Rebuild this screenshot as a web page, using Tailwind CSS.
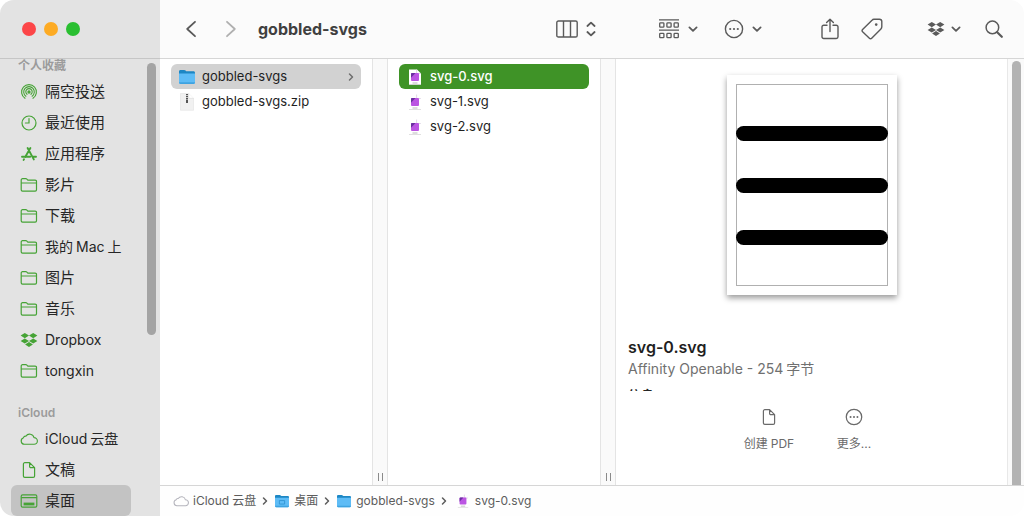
<!DOCTYPE html>
<html lang="zh-CN">
  <head>
    <meta charset="UTF-8" />
    <meta name="viewport" content="width=device-width, initial-scale=1.0" />
    <title>gobbled-svgs</title>
    <script src="https://cdn.jsdelivr.net/npm/@tailwindcss/browser@4"></script>
  </head>
  <body class="bg-white font-['Inter','Noto_Sans_CJK_SC',sans-serif] text-[#262626]">
    <!-- Icons -->
    <svg class="hidden">
      <symbol id="i-folder" viewBox="0 0 18 16" fill="none" stroke="currentColor" stroke-width="1.2" stroke-linejoin="round">
        <path d="M1.2 12.8V3a1.3 1.3 0 0 1 1.3-1.3h3.3c.5 0 .8.2 1.1.5l.9.9h7.4a1.3 1.3 0 0 1 1.3 1.3v8.4a1.3 1.3 0 0 1-1.3 1.3H2.5a1.3 1.3 0 0 1-1.3-1.3zM1.2 6h15.3" />
      </symbol>
      <symbol id="i-airdrop" viewBox="0 0 18 18" fill="none" stroke="currentColor" stroke-width="1.1" stroke-linecap="round">
        <path d="M5 15.3a7.4 7.4 0 1 1 8 0M5.9 13.2a5.3 5.3 0 1 1 6.2 0M7 11.3a3.2 3.2 0 1 1 4 0" />
        <circle cx="9" cy="9" r="1.1" fill="currentColor" />
      </symbol>
      <symbol id="i-clock" viewBox="0 0 18 18" fill="none" stroke="currentColor" stroke-width="1.2" stroke-linecap="round">
        <circle cx="9" cy="9" r="7" />
        <path d="M9 4.6V9H5.4" />
      </symbol>
      <symbol id="i-apps" viewBox="0 0 18 18" fill="none" stroke="currentColor" stroke-width="1.9" stroke-linecap="round">
        <path d="M7.6 3l6.2 11.4M10.4 3L5.2 12M2 11.8h8.2M13.4 11.8H16M4 14.2l-.4.7" />
      </symbol>
      <symbol id="i-dropbox" viewBox="0 0 18 16" fill="currentColor">
        <path d="M4.8 1L9 3.6 4.8 6.2.6 3.6zM13.2 1l4.2 2.6-4.2 2.6L9 3.6zM4.8 6.4L9 9l-4.2 2.6L.6 9zM13.2 6.4L17.4 9l-4.2 2.6L9 9zM9 10l3.9 2.5L9 15l-3.9-2.5z" />
      </symbol>
      <symbol id="i-cloud" viewBox="0 0 19 14" fill="none" stroke="currentColor" stroke-width="1.2" stroke-linejoin="round">
        <path d="M4.6 12.6a3.6 3.6 0 0 1-.9-7A2.2 2.2 0 0 1 6.2 4.1 4.7 4.7 0 0 1 14.8 5.6 3.5 3.5 0 0 1 14.9 12.6z" />
      </symbol>
      <symbol id="i-doc" viewBox="0 0 18 18" fill="none" stroke="currentColor" stroke-width="1.2" stroke-linejoin="round">
        <path d="M9.6 1.7H4.8a1.4 1.4 0 0 0-1.4 1.4v11.8a1.4 1.4 0 0 0 1.4 1.4h8.4a1.4 1.4 0 0 0 1.4-1.4V6.7zM9.6 1.7v3.8a1.2 1.2 0 0 0 1.2 1.2h3.8" />
      </symbol>
      <symbol id="i-desktop" viewBox="0 0 18 16">
        <rect x="1.2" y="1.8" width="15.6" height="12.4" rx="1.4" fill="none" stroke="currentColor" stroke-width="1.2" />
        <path d="M1.2 4.6h15.6" stroke="currentColor" stroke-width="1.2" />
        <rect x="3.6" y="9.6" width="10.8" height="2.8" fill="currentColor" />
      </symbol>
      <symbol id="i-down" viewBox="0 0 10 10" fill="none" stroke="currentColor" stroke-width="1.8" stroke-linecap="round" stroke-linejoin="round">
        <path d="M1.4 3.4L5 6.8l3.6-3.4" />
      </symbol>
      <symbol id="i-next" viewBox="0 0 8 10" fill="none" stroke="currentColor" stroke-width="1.5" stroke-linecap="round" stroke-linejoin="round">
        <path d="M2.5 2l3 3-3 3" />
      </symbol>
      <symbol id="i-more" viewBox="0 0 20 20">
        <circle cx="10" cy="10" r="8.6" fill="none" stroke="currentColor" stroke-width="1.4" />
        <g fill="currentColor"><circle cx="6.2" cy="10" r="1.1" /><circle cx="10" cy="10" r="1.1" /><circle cx="13.8" cy="10" r="1.1" /></g>
      </symbol>
      <symbol id="i-bluefolder" viewBox="0 0 18 16">
        <path d="M1 2.5C1 1.6 1.6 1 2.5 1h3.7c.6 0 1 .2 1.4.6l.6.6h7.3c.9 0 1.5.6 1.5 1.5V8H1z" fill="#1d87c4" />
        <path d="M1 4.4h16v9.1c0 .9-.6 1.5-1.5 1.5h-13C1.6 15 1 14.4 1 13.5z" fill="#5ebcf6" />
        <path d="M1 13.3c0 1.1.6 1.7 1.5 1.7h13c.9 0 1.5-.6 1.5-1.7" fill="#3fa3e0" />
      </symbol>
      <symbol id="i-svgfile" viewBox="0 0 14 16">
        <path d="M1 .5h8l4 4v11H1z" fill="#fff" />
        <path d="M1 15.5h12" stroke="#d8d8d8" stroke-width=".8" />
        <path d="M8.6.5v4h4.2" fill="none" stroke="#d9cfe0" stroke-width=".8" />
        <rect x="3" y="4" width="8" height="8" rx="1" fill="#bb55e2" />
        <path d="M3 5a1 1 0 0 1 1-1h3.5L3 8.8z" fill="#6a2fa0" />
        <path d="M4.5 14h5" stroke="#a9a9a9" stroke-width=".8" />
      </symbol>
      <symbol id="i-zip" viewBox="0 0 18 18">
        <path d="M2.5.5h8.2l4.8 4.8v12h-13z" fill="#f1f1f1" stroke="#e2e2e2" stroke-width=".6" />
        <path d="M10.7.5v4.8h4.8" fill="#fff" stroke="#d8d8d8" stroke-width=".6" />
        <path d="M9 1v6" stroke="#555" stroke-width="2" stroke-dasharray="1.3 .7" />
        <rect x="8" y="6.5" width="2" height="3.5" rx=".6" fill="#555" />
      </symbol>
    </svg>

    <div class="flex h-screen overflow-hidden rounded-[14px]">
      <!-- Sidebar -->
      <aside class="flex w-40 shrink-0 flex-col bg-[#e3e3e3]">
        <div class="flex h-[59px] shrink-0 items-center gap-2 border-b border-[#c6c6c6] pl-[22px]">
          <button aria-label="关闭" class="size-[14px] rounded-full bg-[#fc4648]"></button>
          <button aria-label="最小化" class="size-[14px] rounded-full bg-[#fdab24]"></button>
          <button aria-label="缩放" class="size-[14px] rounded-full bg-[#2abf31]"></button>
        </div>
        <div class="flex min-h-0 flex-1">
          <nav class="w-[131px] shrink-0 pl-[11px] text-sm whitespace-nowrap [&_a]:flex [&_a]:h-[31px] [&_a]:items-center [&_a]:pl-[9px] [&_svg]:mr-[7px] [&_svg]:w-[18px] [&_svg]:shrink-0 [&_svg]:text-[#46a336]">
            <h2 class="h-[17px] pl-[7px] text-xs leading-[14px] font-semibold text-[#9b9b9b]">个人收藏</h2>
            <a href="#" class="text-[15px]"><svg class="h-[18px]"><use href="#i-airdrop" /></svg>隔空投送</a>
            <a href="#" class="text-[15px]"><svg class="h-[18px]"><use href="#i-clock" /></svg>最近使用</a>
            <a href="#" class="text-[15px]"><svg class="h-[18px]"><use href="#i-apps" /></svg>应用程序</a>
            <a href="#" class="text-[15px]"><svg class="h-4"><use href="#i-folder" /></svg>影片</a>
            <a href="#" class="text-[15px]"><svg class="h-4"><use href="#i-folder" /></svg>下载</a>
            <a href="#"><svg class="h-4"><use href="#i-folder" /></svg>我的<span class="mx-[3px]">Mac</span>上</a>
            <a href="#" class="text-[15px]"><svg class="h-4"><use href="#i-folder" /></svg>图片</a>
            <a href="#" class="text-[15px]"><svg class="h-4"><use href="#i-folder" /></svg>音乐</a>
            <a href="#"><svg class="h-4"><use href="#i-dropbox" /></svg>Dropbox</a>
            <a href="#"><svg class="h-4"><use href="#i-folder" /></svg>tongxin</a>
            <h2 class="mt-[17px] h-5 pl-[7px] text-xs leading-5 font-semibold text-[#9b9b9b]">iCloud</h2>
            <a href="#"><svg class="h-[14px]"><use href="#i-cloud" /></svg>iCloud<span class="ml-[3px]">云盘</span></a>
            <a href="#" class="text-[15px]"><svg class="h-[18px]"><use href="#i-doc" /></svg>文稿</a>
            <a href="#" class="rounded-md bg-[#c3c3c3] text-[15px]"><svg class="h-4"><use href="#i-desktop" /></svg>桌面</a>
          </nav>
          <div class="mt-1 ml-4 h-[272px] w-[9px] rounded-full bg-[#a4a4a4]"></div>
        </div>
      </aside>

      <div class="flex min-w-0 flex-1 flex-col">
        <!-- Toolbar -->
        <header class="flex h-[59px] shrink-0 items-center border-b border-[#d6d6d6] bg-[#fbfbfb] pr-[21px] pl-6 text-[#5a5a5a]">
          <button aria-label="后退">
            <svg class="h-5 w-[14px]" viewBox="0 0 14 20" fill="none" stroke="currentColor" stroke-width="1.8" stroke-linecap="round" stroke-linejoin="round"><path d="M11 2.800L3.200 10l7.800 7.200" /></svg>
          </button>
          <button aria-label="前进" class="ml-[26px] text-[#b0b0b0]">
            <svg class="h-5 w-[14px]" viewBox="0 0 14 20" fill="none" stroke="currentColor" stroke-width="1.8" stroke-linecap="round" stroke-linejoin="round"><path d="M3 2.800l7.800 7.200L3 17.200" /></svg>
          </button>
          <h1 class="ml-5 text-base font-bold text-[#404040]">gobbled-svgs</h1>
          <div class="ml-auto flex items-center">
            <button aria-label="分栏" class="flex items-center gap-2">
              <svg class="h-[18px] w-[22px]" viewBox="0 0 22 18" fill="none" stroke="currentColor" stroke-width="1.4"><rect x=".8" y="1" width="20.4" height="16" rx="1.6" /><path d="M7.500 1v16M14.500 1v16" /></svg>
              <svg class="h-4 w-[10px]" viewBox="0 0 10 16" fill="none" stroke="currentColor" stroke-width="1.8" stroke-linecap="round" stroke-linejoin="round"><path d="M1.400 5L5 1.600 8.600 5M1.400 11L5 14.400 8.600 11" /></svg>
            </button>
            <button aria-label="分组" class="ml-[62px] flex items-center gap-2">
              <svg class="h-5 w-[22px]" viewBox="0 0 22 20" fill="none" stroke="currentColor" stroke-width="1.3"><path d="M1 .8h20M1 11.200h20" /><rect x="1.700" y="3.800" width="4.200" height="4.400" rx=".8" /><rect x="8.900" y="3.800" width="4.200" height="4.400" rx=".8" /><rect x="16.100" y="3.800" width="4.200" height="4.400" rx=".8" /><rect x="1.700" y="14.300" width="4.200" height="4.400" rx=".8" /><rect x="8.900" y="14.300" width="4.200" height="4.400" rx=".8" /><rect x="16.100" y="14.300" width="4.200" height="4.400" rx=".8" /></svg>
              <svg class="size-[10px]"><use href="#i-down" /></svg>
            </button>
            <button aria-label="操作" class="ml-[26px] flex items-center gap-2">
              <svg class="size-5"><use href="#i-more" /></svg>
              <svg class="size-[10px]"><use href="#i-down" /></svg>
            </button>
            <button aria-label="共享" class="ml-[59px]">
              <svg class="h-[22px] w-[18px]" viewBox="0 0 18 22" fill="none" stroke="currentColor" stroke-width="1.4" stroke-linecap="round" stroke-linejoin="round"><path d="M6 7.200H2.700A1.700 1.700 0 0 0 1 8.900v9.900a1.700 1.700 0 0 0 1.700 1.700h12.600a1.700 1.700 0 0 0 1.700-1.700V8.900a1.700 1.700 0 0 0-1.700-1.700H12M9 13.500V1.400M5.600 4.600L9 1.200l3.400 3.400" /></svg>
            </button>
            <button aria-label="标签" class="ml-[22px]">
              <svg class="size-[22px]" viewBox="0 0 22 22" fill="none" stroke="currentColor" stroke-width="1.4" stroke-linejoin="round"><path d="M1.600 11.600L11 2.200A3 3 0 0 1 13 1.200h5.400a2.400 2.400 0 0 1 2.400 2.400V8.800a3 3 0 0 1-.9 2.100L10.700 20.200a1.600 1.600 0 0 1-2.300 0L1.600 13.800a1.600 1.600 0 0 1 0-2.200z" /><circle cx="15.200" cy="6.600" r="1.3" fill="currentColor" stroke="none" /></svg>
            </button>
            <button aria-label="Dropbox" class="ml-11 flex items-center gap-[6px]">
              <svg class="h-4 w-[18px]"><use href="#i-dropbox" /></svg>
              <svg class="size-[10px]"><use href="#i-down" /></svg>
            </button>
            <button aria-label="搜索" class="ml-6">
              <svg class="size-[18px]" viewBox="0 0 18 18" fill="none" stroke="currentColor" stroke-linecap="round"><circle cx="7.4" cy="7.4" r="6.3" stroke-width="1.5" /><path d="M12.200 12.200l4.600 4.600" stroke-width="2.2" /></svg>
            </button>
          </div>
        </header>

        <!-- Columns -->
        <main class="flex min-h-0 flex-1 text-[13px]">
          <div class="w-[212px] shrink-0 px-[11px] pt-[5px] text-[#1f1f1f]">
            <a href="#" class="flex h-[25px] items-center rounded-md bg-[#d2d2d2] pr-[6px] pl-[7px]">
              <svg class="mr-[6px] h-4 w-[18px]"><use href="#i-bluefolder" /></svg>gobbled-svgs
              <svg class="ml-auto h-[10px] w-2 text-[#6e6e6e]"><use href="#i-next" /></svg>
            </a>
            <a href="#" class="flex h-[25px] items-center pl-[7px]"><svg class="mr-[6px] size-[18px]"><use href="#i-zip" /></svg>gobbled-svgs.zip</a>
          </div>
          <div class="flex w-4 shrink-0 items-end justify-center gap-[3px] border-x border-[#e4e4e4] bg-[#fafafa] pb-1">
            <span class="h-2 w-px bg-[#8a8a8a]"></span><span class="h-2 w-px bg-[#8a8a8a]"></span>
          </div>
          <div class="w-[212px] shrink-0 px-[11px] pt-[5px] text-[#1f1f1f]">
            <a href="#" class="flex h-[25px] items-center gap-2 rounded-md bg-[#3f9327] pl-[9px] font-medium text-white"><svg class="h-4 w-[14px]"><use href="#i-svgfile" /></svg>svg-0.svg</a>
            <a href="#" class="flex h-[25px] items-center gap-2 pl-[9px]"><svg class="h-4 w-[14px]"><use href="#i-svgfile" /></svg>svg-1.svg</a>
            <a href="#" class="flex h-[25px] items-center gap-2 pl-[9px]"><svg class="h-4 w-[14px]"><use href="#i-svgfile" /></svg>svg-2.svg</a>
          </div>
          <div class="flex w-4 shrink-0 items-end justify-center gap-[3px] border-x border-[#e4e4e4] bg-[#fafafa] pb-1">
            <span class="h-2 w-px bg-[#8a8a8a]"></span><span class="h-2 w-px bg-[#8a8a8a]"></span>
          </div>

          <!-- Preview -->
          <section class="min-w-0 flex-1 px-3 pt-4">
            <div class="mx-auto flex h-[220px] w-[170px] items-center justify-center bg-white shadow-[0_3px_6px_rgba(0,0,0,0.4)]">
              <div class="flex h-[202px] w-[152px] flex-col justify-center gap-[37px] border border-[#b0b0b0]">
                <div class="-mx-px h-[15px] rounded-full bg-black"></div>
                <div class="-mx-px h-[15px] rounded-full bg-black"></div>
                <div class="-mx-px h-[15px] rounded-full bg-black"></div>
              </div>
            </div>
            <h2 class="mt-[42px] text-base leading-5 font-semibold text-[#1f1f1f]">svg-0.svg</h2>
            <p class="mt-[2px] text-sm leading-5 text-[#707070]">Affinity Openable - 254<span class="ml-[3px]">字节</span></p>
            <!-- Section title scrolls under the action buttons -->
            <h3 class="mt-2 h-1 overflow-hidden text-[13px] leading-4 font-bold">信息</h3>
            <div class="mt-[17px] flex justify-center text-xs text-[#6a6a6a]">
              <button class="flex w-[85px] flex-col items-center gap-[10px]"><svg class="size-[18px]"><use href="#i-doc" /></svg><span class="leading-4">创建<span class="ml-[3px]">PDF</span></span></button>
              <button class="flex w-[85px] flex-col items-center gap-[10px]"><svg class="size-[18px]"><use href="#i-more" /></svg><span class="leading-4">更多...</span></button>
            </div>
          </section>
          <div class="flex w-[17px] shrink-0 border-l border-[#e8e8e8] bg-[#fafafa] pt-[2px] pl-1">
            <div class="w-[9px] rounded-t-full bg-[#b3b3b3]"></div>
          </div>
        </main>

        <!-- Path bar -->
        <footer class="flex h-[31px] shrink-0 items-center border-t border-[#d6d6d6] bg-[#fefefe] pl-[13px] text-xs text-[#5c5c5c]">
          <svg class="mr-1 h-3 w-4 text-[#b4b4bc]"><use href="#i-cloud" /></svg>iCloud<span class="ml-[3px]">云盘</span>
          <svg class="mx-[5px] h-[10px] w-2"><use href="#i-next" /></svg>
          <svg class="mr-1 h-[14px] w-4" viewBox="0 0 18 16"><use href="#i-bluefolder" /><path d="M6 7.500h6v4H6z" fill="none" stroke="#2f93d2" /></svg>桌面
          <svg class="mx-[5px] h-[10px] w-2"><use href="#i-next" /></svg>
          <svg class="mr-1 h-[14px] w-4"><use href="#i-bluefolder" /></svg>gobbled-svgs
          <svg class="mx-[5px] h-[10px] w-2"><use href="#i-next" /></svg>
          <svg class="mr-[6px] ml-1 h-[14px] w-3"><use href="#i-svgfile" /></svg>svg-0.svg
        </footer>
      </div>
    </div>
  </body>
</html>
